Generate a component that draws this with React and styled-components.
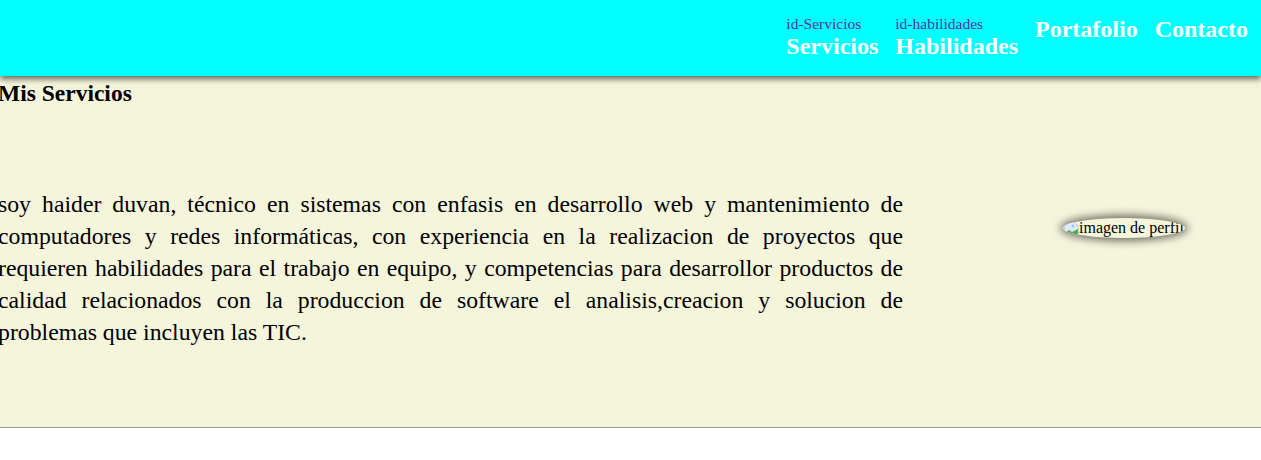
import React from 'react';
import styled, { createGlobalStyle } from 'styled-components';

const GlobalStyle = createGlobalStyle`
  html, body {
    margin: 0;
    padding: 0;
    background: #ffffff;
    font-family: 'Liberation Serif', 'Times New Roman', serif;
  }
`;

const Header = styled.header`
  position: relative;
  z-index: 2;
  height: 76px;
  background: #00ffff;
  box-shadow: 0 3px 6px rgba(0, 0, 0, 0.6);
  display: flex;
  justify-content: flex-end;
  align-items: flex-start;
  padding-right: 13px;
`;

const Nav = styled.nav`
  display: flex;
  align-items: flex-start;
  gap: 17px;
`;

const NavItem = styled.div`
  display: flex;
  flex-direction: column;
  padding-top: 15px;
`;

const Tag = styled.span`
  font-size: 15.5px;
  line-height: 17px;
  color: #55329a;
`;

const NavLink = styled.a`
  font-size: 24px;
  font-weight: bold;
  line-height: 28px;
  color: #ffffff;
  text-decoration: none;
`;

const Section = styled.section`
  background: #f5f5dc;
  height: 351px;
  border-bottom: 1px solid #999999;
  box-shadow: 0 2px 2px rgba(0, 0, 0, 0.12);
  display: flex;
  flex-direction: column;
`;

const Title = styled.h2`
  margin: 4px 0 0 -2px;
  font-size: 23.5px;
  line-height: 27px;
  font-weight: bold;
  color: #000000;
`;

const Body = styled.div`
  display: flex;
  align-items: flex-start;
  margin-top: 81px;
`;

const Text = styled.p`
  margin: 0 0 0 -2px;
  width: 905px;
  flex: none;
  font-size: 23.75px;
  line-height: 32px;
  color: #000000;
`;

const Line = styled.span`
  display: block;
  white-space: nowrap;
  word-spacing: ${(p) => (p.$last ? '0' : '-4px')};
  text-align: ${(p) => (p.$last ? 'left' : 'justify')};
  text-align-last: ${(p) => (p.$last ? 'left' : 'justify')};
`;

const Picture = styled.div`
  flex: 1;
  display: flex;
  justify-content: center;
  padding: 30px 0 0 84px;
`;

const Broken = styled.span`
  width: 122px;
  height: 20px;
  border-radius: 50%;
  box-shadow: 0 0 8px 3px rgba(0, 0, 0, 0.55);
  overflow: hidden;
  display: flex;
  align-items: center;
  white-space: nowrap;
  font-size: 16px;
  line-height: 20px;
  color: #000000;
`;

const BrokenIcon = () => (
  <svg width="16" height="16" viewBox="0 0 16 16" style={{ flex: 'none' }}>
    <path d="M1 2h10l4 4v8H1z" fill="#dfe8f5" stroke="#9ab" strokeWidth="0.6" />
    <path d="M1 14l5-4 3 2 6-3v5z" fill="#4caf50" />
    <circle cx="10" cy="6" r="1.5" fill="#9cc3ea" />
  </svg>
);

const lines = [
  'soy haider duvan, técnico en sistemas con enfasis en desarrollo web y mantenimiento de',
  'computadores y redes informáticas, con experiencia en la realizacion de proyectos que',
  'requieren habilidades para el trabajo en equipo, y competencias para desarrollor productos de',
  'calidad relacionados con la produccion de software el analisis,creacion y solucion de',
  'problemas que incluyen las TIC.',
];

export default function App() {
  return (
    <>
      <GlobalStyle />
      <Header>
        <Nav>
          <NavItem>
            <Tag>id-Servicios</Tag>
            <NavLink href="#servicios">Servicios</NavLink>
          </NavItem>
          <NavItem>
            <Tag>id-habilidades</Tag>
            <NavLink href="#habilidades">Habilidades</NavLink>
          </NavItem>
          <NavItem>
            <NavLink href="#portafolio">Portafolio</NavLink>
          </NavItem>
          <NavItem>
            <NavLink href="#contacto">Contacto</NavLink>
          </NavItem>
        </Nav>
      </Header>
      <Section id="servicios">
        <Title>Mis Servicios</Title>
        <Body>
          <Text>
            {lines.map((l, i) => (
              <Line key={i} $last={i === lines.length - 1}>
                {l}
              </Line>
            ))}
          </Text>
          <Picture>
            <Broken>
              <BrokenIcon />
              imagen de perfil
            </Broken>
          </Picture>
        </Body>
      </Section>
    </>
  );
}
